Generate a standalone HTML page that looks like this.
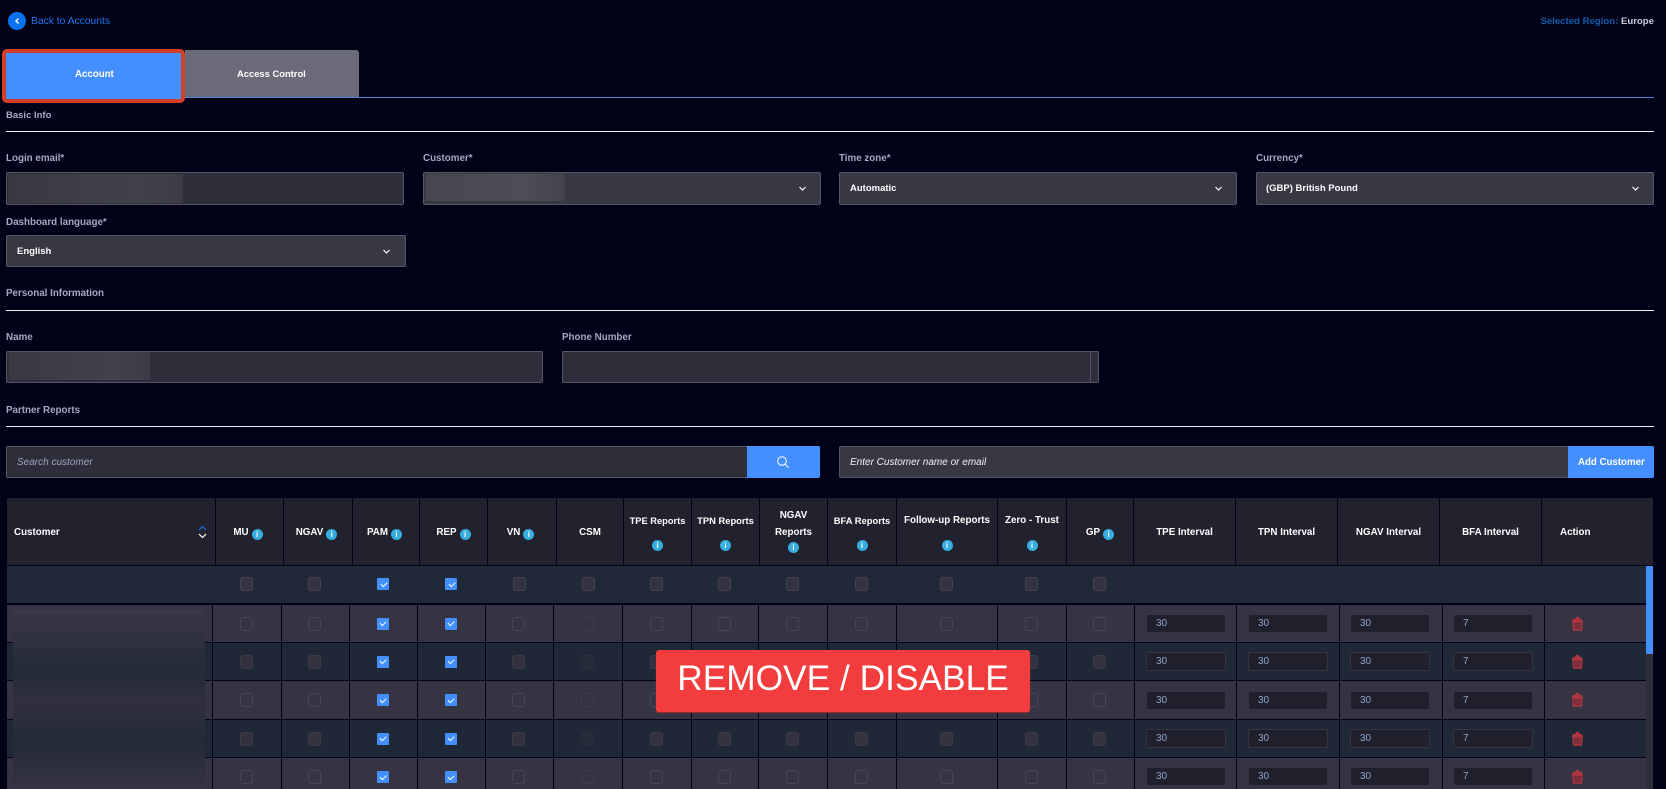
<!DOCTYPE html>
<html><head><meta charset="utf-8"><title>Account</title>
<style>
*{box-sizing:border-box}
html,body{margin:0;padding:0;width:1666px;height:789px;overflow:hidden;background:#010118;font-family:"Liberation Sans",sans-serif}
#p{position:absolute;left:0;top:0;width:1666px;height:789px;overflow:hidden;background:#010118}
.a{position:absolute}
.t{position:absolute;white-space:nowrap;font-size:9.8px;line-height:14px;font-weight:700;margin-top:1px}
.v{font-size:9.5px}
.lab{color:#a4a9c4}
.hr{position:absolute;left:6px;width:1648px;height:1px;background:#f2f2f5}
.f{position:absolute;border:1px solid #575667;border-radius:2px;background:#2e2d3a}
.s{background:#383744}
.bl{position:absolute}
.ch{position:absolute;width:7px;height:7px}
.w{color:#fff}
.hd,.r{position:absolute;left:7px;display:grid}
.hd{top:498px;height:67px;width:1646px;grid-template-columns:209px 68px 69px 67px 68px 69px 67px 68px 68px 68px 69px 101px 69px 67px 102px 102px 102px 102px 111px;background:#22212e}
.hd>div{border-right:1px solid #010118;color:#fff;font-weight:700;font-size:9.8px;line-height:16.5px;display:flex;align-items:center;justify-content:center;text-align:center;flex-direction:column;white-space:nowrap;padding-top:3px}
.hd>div:last-child{border-right:0}
.hd .two span.l{margin-bottom:13px;line-height:12px}
.hd em{display:inline-block;width:11px;height:11px;border-radius:50%;background:#36aee0;color:#fff;font:700 8px/11px "Liberation Sans",sans-serif;text-align:center;vertical-align:-2px;margin-left:3px}
.hd .two em{margin-left:0}
.hd span.m{margin-right:3px}
.r{width:1639px;grid-template-columns:206px 69px 68px 68px 68px 68px 69px 69px 67px 69px 69px 101px 69px 68px 102px 103px 103px 102px 101px}
.r>div{border-right:1px solid #010118;display:flex;align-items:center;justify-content:center;position:relative}
.r>div:last-child{border-right:0}
.o{background:#363442}
.e{background:#1f2836}
.r i{display:block;width:13px;height:14px;border-radius:3px;border:1px solid #474653;margin-right:2px}
.e i{background:#33323e;border-color:#3c3b48}
.r i.x,.o i.x{border-color:#3c3b49}
.e i.x{background:#252b39;border-color:#2a2f3d}
.k{display:block;width:12px;height:12px;background:#448fff;border-radius:1px;position:relative;margin-right:2px}
.k:after{content:"";position:absolute;left:3.5px;top:3.5px;width:4.5px;height:2.5px;border-left:1.1px solid #fff;border-bottom:1.1px solid #fff;transform:rotate(-45deg)}
.n{display:block;position:absolute;left:12px;width:78px;background:#201f2c;border-radius:2px;color:#8fa6cc;font-size:10px;line-height:17px;padding-left:9px;top:10px;height:17px}
.r>div:nth-child(17) .n,.r>div:nth-child(18) .n{left:11px}
.e .n{left:11px;width:80px;top:9px;height:19px;line-height:17px;border:1px solid #35343f;padding-left:9px}
.e>div:nth-child(17) .n,.e>div:nth-child(18) .n{left:10px}
.fc{position:absolute;width:13px;height:14px;border-radius:3px;border:1px solid #444350;background:#33323e;top:577px}
.fk{position:absolute;top:578px;width:12px;height:12px;background:#448fff;border-radius:1px}
.fk:after{content:"";position:absolute;left:3.5px;top:3.5px;width:4.5px;height:2.5px;border-left:1.1px solid #fff;border-bottom:1.1px solid #fff;transform:rotate(-45deg)}
.tr{width:13px;height:15px;position:absolute;left:26px;top:11px}
</style></head><body><div id="p">

<svg class="a" style="left:8px;top:12px" width="18" height="18" viewBox="0 0 18 18"><circle cx="9" cy="9" r="9" fill="#0a72ef"/><path d="M10.5 6.5L8 9l2.5 2.5" fill="none" stroke="#fff" stroke-width="1.4"/></svg>
<div class="t" style="left:31px;top:14px;color:#2078ea;font-weight:400;font-size:10.3px">Back to Accounts</div>
<div class="t" style="right:12px;top:14px;font-size:9.6px;color:#0f5eab">Selected Region: <span style="color:#c9cbd6">Europe</span></div>

<div class="a" style="left:185px;top:50px;width:174px;height:47px;background:#6b6a79;border-radius:0 3px 0 0"></div>
<div class="a" style="left:185px;top:97px;width:1469px;height:1px;background:#4a85d8"></div>
<div class="a" style="left:2px;top:49px;width:183px;height:54px;background:#448fff;border:4px solid #d23f28;border-radius:5px"></div>
<div class="t w" style="left:75px;top:67px;font-size:9.7px">Account</div>
<div class="t w" style="left:237px;top:66px;font-size:9.4px">Access Control</div>

<div class="t lab" style="left:6px;top:108px;font-size:9.5px">Basic Info</div>
<div class="hr" style="top:131px"></div>

<div class="t lab" style="left:6px;top:151px">Login email*</div>
<div class="f" style="left:6px;top:172px;width:398px;height:33px"></div>
<div class="bl" style="left:8px;top:174px;width:175px;height:29px;background:linear-gradient(90deg,#393843,#41414b 75%,#3c3b47)"></div>

<div class="t lab" style="left:423px;top:151px">Customer*</div>
<div class="f s" style="left:423px;top:172px;width:398px;height:33px"></div>
<div class="bl" style="left:426px;top:174px;width:139px;height:27px;background:linear-gradient(90deg,#474651,#4d4d58 70%,#44434f)"></div>
<svg class="ch" style="left:799px;top:185px" viewBox="0 0 7 7"><path d="M.5 2l3 3 3-3" fill="none" stroke="#fff" stroke-width="1.2"/></svg>

<div class="t lab" style="left:839px;top:151px">Time zone*</div>
<div class="f s" style="left:839px;top:172px;width:398px;height:33px"></div>
<div class="t w v" style="left:850px;top:181px">Automatic</div>
<svg class="ch" style="left:1215px;top:185px" viewBox="0 0 7 7"><path d="M.5 2l3 3 3-3" fill="none" stroke="#fff" stroke-width="1.2"/></svg>

<div class="t lab" style="left:1256px;top:151px">Currency*</div>
<div class="f s" style="left:1256px;top:172px;width:398px;height:33px"></div>
<div class="t w v" style="left:1266px;top:181px">(GBP) British Pound</div>
<svg class="ch" style="left:1632px;top:185px" viewBox="0 0 7 7"><path d="M.5 2l3 3 3-3" fill="none" stroke="#fff" stroke-width="1.2"/></svg>

<div class="t lab" style="left:6px;top:215px">Dashboard language*</div>
<div class="f s" style="left:6px;top:235px;width:400px;height:32px"></div>
<div class="t w v" style="left:17px;top:244px">English</div>
<svg class="ch" style="left:383px;top:248px" viewBox="0 0 7 7"><path d="M.5 2l3 3 3-3" fill="none" stroke="#fff" stroke-width="1.2"/></svg>

<div class="t lab" style="left:6px;top:286px">Personal Information</div>
<div class="hr" style="top:310px"></div>

<div class="t lab" style="left:6px;top:330px">Name</div>
<div class="f" style="left:6px;top:351px;width:537px;height:32px"></div>
<div class="bl" style="left:9px;top:352px;width:141px;height:28px;background:linear-gradient(90deg,#393843,#41414b 75%,#3c3b47)"></div>

<div class="t lab" style="left:562px;top:330px">Phone Number</div>
<div class="f" style="left:562px;top:351px;width:537px;height:32px"></div>
<div class="a" style="left:1090px;top:351px;width:1px;height:32px;background:#575667"></div>

<div class="t lab" style="left:6px;top:403px">Partner Reports</div>
<div class="hr" style="top:426px"></div>

<div class="f" style="left:6px;top:446px;width:742px;height:32px"></div>
<div class="t" style="left:17px;top:455px;font-weight:400;font-style:italic;color:#a2a6c2;font-size:10px">Search customer</div>
<div class="a" style="left:747px;top:446px;width:73px;height:32px;background:#448fff;border-radius:0 2px 2px 0"></div>
<svg class="a" style="left:776px;top:455px" width="14" height="14" viewBox="0 0 14 14"><circle cx="6" cy="6" r="4.3" fill="none" stroke="#fff" stroke-width="1"/><path d="M9.2 9.2L12.6 12.6" stroke="#fff" stroke-width="1"/></svg>

<div class="f s" style="left:839px;top:446px;width:730px;height:32px"></div>
<div class="t" style="left:850px;top:455px;font-weight:400;font-style:italic;color:#f2f2f6;font-size:10px">Enter Customer name or email</div>
<div class="a" style="left:1568px;top:446px;width:86px;height:32px;background:#448fff;border-radius:0 2px 2px 0"></div>
<div class="t w" style="left:1578px;top:455px;font-size:9.7px">Add Customer</div>

<div class="hd">
<div style="align-items:flex-start;padding-left:7px">Customer</div>
<div><span class="m">MU<em>i</em></span></div>
<div><span class="m">NGAV<em>i</em></span></div>
<div><span class="m">PAM<em>i</em></span></div>
<div><span>REP<em>i</em></span></div>
<div><span class="m">VN<em>i</em></span></div>
<div>CSM</div>
<div class="two" style="font-size:9.3px"><span class="l">TPE Reports</span><em>i</em></div>
<div class="two" style="font-size:9.4px"><span class="l">TPN Reports</span><em>i</em></div>
<div class="two" style="padding-top:0"><span style="line-height:16.5px;margin-top:-2px">NGAV<br>Reports</span><em style="margin-top:1px">i</em></div>
<div class="two" style="font-size:9.4px"><span class="l">BFA Reports</span><em>i</em></div>
<div class="two"><span class="l">Follow-up Reports</span><em>i</em></div>
<div class="two"><span class="l">Zero - Trust</span><em>i</em></div>
<div><span>GP<em>i</em></span></div>
<div>TPE Interval</div>
<div>TPN Interval</div>
<div>NGAV Interval</div>
<div>BFA Interval</div>
<div style="align-items:flex-start;padding-left:18px">Action</div>
</div>
<svg class="a" style="left:198px;top:525px" width="9" height="14" viewBox="0 0 9 14"><path d="M1 5l3.5-3.5L8 5" fill="none" stroke="#1670e0" stroke-width="1.2"/><path d="M1 9l3.5 3.5L8 9" fill="none" stroke="#fff" stroke-width="1.2"/></svg>

<div class="a" style="left:7px;top:566px;width:1639px;height:37px;background:#202938"></div>
<div class="fc" style="left:240px"></div><div class="fc" style="left:308px"></div><div class="fk" style="left:377px"></div><div class="fk" style="left:445px"></div><div class="fc" style="left:513px"></div><div class="fc" style="left:582px"></div><div class="fc" style="left:650px"></div><div class="fc" style="left:718px"></div><div class="fc" style="left:786px"></div><div class="fc" style="left:855px"></div><div class="fc" style="left:940px"></div><div class="fc" style="left:1025px"></div><div class="fc" style="left:1093px"></div>

<div class="r o" style="top:605px;height:37px"><div></div><div><i></i></div><div><i></i></div><div><b class="k"></b></div><div><b class="k"></b></div><div><i></i></div><div><i class="x"></i></div><div><i></i></div><div><i></i></div><div><i></i></div><div><i></i></div><div><i></i></div><div><i></i></div><div><i></i></div><div><span class="n">30</span></div><div><span class="n">30</span></div><div><span class="n">30</span></div><div><span class="n">7</span></div><div style="display:block"><svg class="tr" viewBox="0 0 13 15"><path d="M4.5 2.5L5.5 .8h2l1 1.7 2.4 .7 1 2.8H.6l1-2.8z" fill="#ad3640"/><path d="M2 6l.6 8h7.8L11 6z" fill="#6e2b38" stroke="#ad3640" stroke-width="1.4"/><path d="M5 7.5v5M8 7.5v5" stroke="#ad3640" stroke-width=".9"/></svg></div></div>
<div class="r e" style="top:643px;height:37px"><div></div><div><i></i></div><div><i></i></div><div><b class="k"></b></div><div><b class="k"></b></div><div><i></i></div><div><i class="x"></i></div><div><i></i></div><div><i></i></div><div><i></i></div><div><i></i></div><div><i></i></div><div><i></i></div><div><i></i></div><div><span class="n">30</span></div><div><span class="n">30</span></div><div><span class="n">30</span></div><div><span class="n">7</span></div><div style="display:block"><svg class="tr" viewBox="0 0 13 15"><path d="M4.5 2.5L5.5 .8h2l1 1.7 2.4 .7 1 2.8H.6l1-2.8z" fill="#ad3640"/><path d="M2 6l.6 8h7.8L11 6z" fill="#6e2b38" stroke="#ad3640" stroke-width="1.4"/><path d="M5 7.5v5M8 7.5v5" stroke="#ad3640" stroke-width=".9"/></svg></div></div>
<div class="r o" style="top:681px;height:38px"><div></div><div><i></i></div><div><i></i></div><div><b class="k"></b></div><div><b class="k"></b></div><div><i></i></div><div><i class="x"></i></div><div><i></i></div><div><i></i></div><div><i></i></div><div><i></i></div><div><i></i></div><div><i></i></div><div><i></i></div><div><span class="n" style="top:11px">30</span></div><div><span class="n" style="top:11px">30</span></div><div><span class="n" style="top:11px">30</span></div><div><span class="n" style="top:11px">7</span></div><div style="display:block"><svg class="tr" viewBox="0 0 13 15"><path d="M4.5 2.5L5.5 .8h2l1 1.7 2.4 .7 1 2.8H.6l1-2.8z" fill="#ad3640"/><path d="M2 6l.6 8h7.8L11 6z" fill="#6e2b38" stroke="#ad3640" stroke-width="1.4"/><path d="M5 7.5v5M8 7.5v5" stroke="#ad3640" stroke-width=".9"/></svg></div></div>
<div class="r e" style="top:720px;height:37px"><div></div><div><i></i></div><div><i></i></div><div><b class="k"></b></div><div><b class="k"></b></div><div><i></i></div><div><i class="x"></i></div><div><i></i></div><div><i></i></div><div><i></i></div><div><i></i></div><div><i></i></div><div><i></i></div><div><i></i></div><div><span class="n">30</span></div><div><span class="n">30</span></div><div><span class="n">30</span></div><div><span class="n">7</span></div><div style="display:block"><svg class="tr" viewBox="0 0 13 15"><path d="M4.5 2.5L5.5 .8h2l1 1.7 2.4 .7 1 2.8H.6l1-2.8z" fill="#ad3640"/><path d="M2 6l.6 8h7.8L11 6z" fill="#6e2b38" stroke="#ad3640" stroke-width="1.4"/><path d="M5 7.5v5M8 7.5v5" stroke="#ad3640" stroke-width=".9"/></svg></div></div>
<div class="r o" style="top:758px;height:38px"><div></div><div><i></i></div><div><i></i></div><div><b class="k"></b></div><div><b class="k"></b></div><div><i></i></div><div><i class="x"></i></div><div><i></i></div><div><i></i></div><div><i></i></div><div><i></i></div><div><i></i></div><div><i></i></div><div><i></i></div><div><span class="n">30</span></div><div><span class="n">30</span></div><div><span class="n">30</span></div><div><span class="n">7</span></div><div style="display:block"><svg class="tr" viewBox="0 0 13 15"><path d="M4.5 2.5L5.5 .8h2l1 1.7 2.4 .7 1 2.8H.6l1-2.8z" fill="#ad3640"/><path d="M2 6l.6 8h7.8L11 6z" fill="#6e2b38" stroke="#ad3640" stroke-width="1.4"/><path d="M5 7.5v5M8 7.5v5" stroke="#ad3640" stroke-width=".9"/></svg></div></div>

<div class="a" style="left:13px;top:610px;width:192px;height:175px;background:linear-gradient(180deg,#3a3846 0%,#343340 12%,#262c3a 28%,#252b39 38%,#302f3e 52%,#2c2e3c 62%,#232a38 75%,#2a2d3b 85%,#343341 100%)"></div>

<div class="a" style="left:1646px;top:566px;width:7px;height:223px;background:#2f2e3b"></div>
<div class="a" style="left:1646px;top:566px;width:7px;height:88px;background:#448fff"></div>

<div class="a" style="left:656px;top:650px;width:374px;height:62px;background:#f33c3d;border-radius:3px;box-shadow:0 1px 1px #a52a2f"></div>
<div class="a" style="left:656px;top:649px;width:374px;height:60px;color:#fff;font-size:35.3px;line-height:60px;text-align:center;white-space:nowrap">REMOVE / DISABLE</div>

</div></body></html>
